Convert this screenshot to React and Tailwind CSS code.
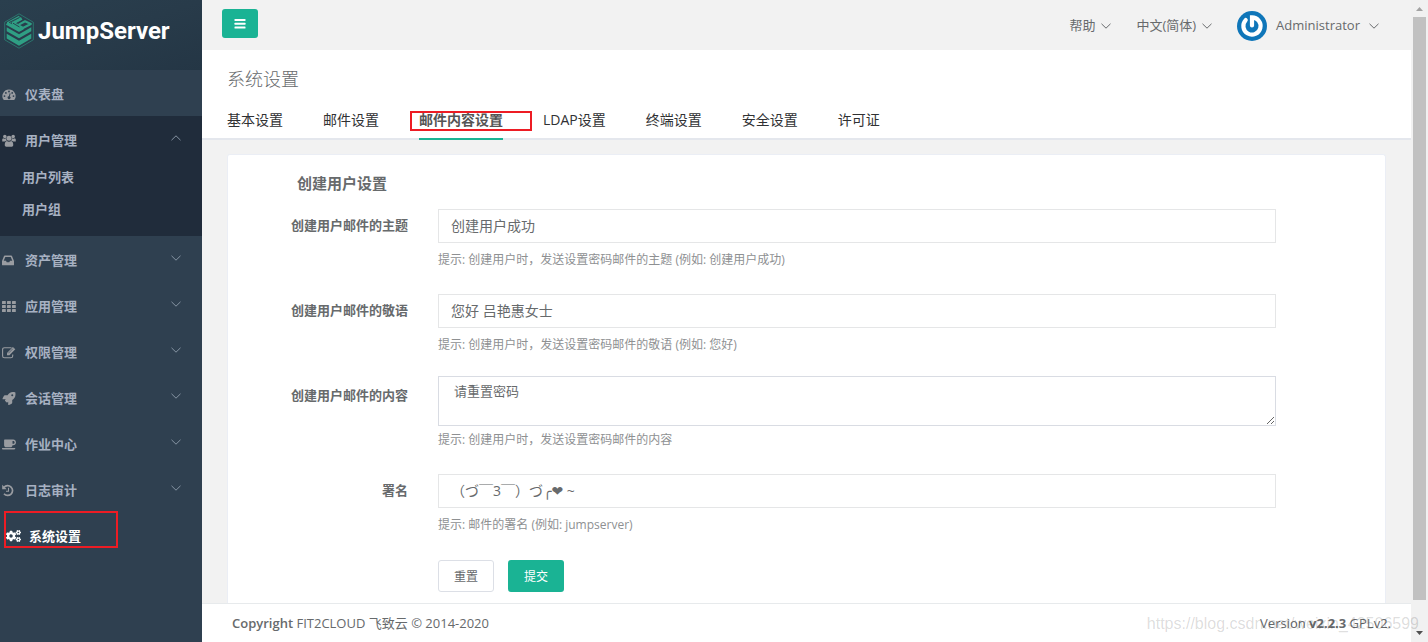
import { FaRocket, FaCoffee, FaCogs } from "react-icons/fa";

const menus = [
  { label: "仪表盘", icon: DashboardIcon },
  { label: "用户管理", icon: GroupIcon, open: true, children: ["用户列表", "用户组"] },
  { label: "资产管理", icon: InboxIcon, arrow: true },
  { label: "应用管理", icon: GridIcon, arrow: true },
  { label: "权限管理", icon: EditIcon, arrow: true },
  { label: "会话管理", icon: FaRocket, arrow: true },
  { label: "作业中心", icon: FaCoffee, arrow: true },
  { label: "日志审计", icon: HistoryIcon, arrow: true },
];

const tabs = [
  { label: "基本设置" },
  { label: "邮件设置" },
  { label: "邮件内容设置", active: true },
  { label: "LDAP设置" },
  { label: "终端设置" },
  { label: "安全设置" },
  { label: "许可证" },
];

function Chevron({ up, className = "" }) {
  return (
    <svg viewBox="0 0 10 6" className={`w-[10px] h-[6px] shrink-0 ${className}`} fill="none" stroke="currentColor">
      <path d={up ? "M0.5 5.2 5 0.8 9.5 5.2" : "M0.5 0.8 5 5.2 9.5 0.8"} />
    </svg>
  );
}

function DashboardIcon({ className }) {
  return (
    <svg viewBox="0 0 14 13" className={className} fill="currentColor">
      <path
        fillRule="evenodd"
        d="M7 1.500A6.600 6.600 0 0 0 1.400 11.600Q1.600 12 2 12H12Q12.400 12 12.600 11.600A6.600 6.600 0 0 0 7 1.500ZM2.500 7.200a.9.9 0 1 1 0 1.800.9.9 0 0 1 0-1.800ZM3.900 4a.9.9 0 1 1 0 1.800.9.9 0 0 1 0-1.800ZM7 2.600a.9.9 0 1 1 0 1.800.9.9 0 0 1 0-1.800ZM10.200 4a.9.9 0 1 1 0 1.800.9.9 0 0 1 0-1.800ZM11.500 7.200a.9.9 0 1 1 0 1.800.9.9 0 0 1 0-1.800ZM7.700 5.300l.9.200-.8 3a1.400 1.400 0 1 1-.9-.2Z"
      />
    </svg>
  );
}

function GroupIcon({ className }) {
  return (
    <svg viewBox="0 0 15 14" className={className} fill="currentColor">
      <circle cx="3" cy="2.800" r="1.900" />
      <circle cx="12" cy="2.800" r="1.900" />
      <path d="M0.200 8V6Q0.200 4.600 1.400 4.500 3 5.500 4.300 4.700 4.200 6.200 5.200 7.200 3.800 7.200 3 8.200H1Q0.200 8.200 0.200 8ZM14.800 8V6Q14.800 4.600 13.600 4.500 12 5.500 10.700 4.700 10.800 6.200 9.800 7.200 11.200 7.200 12 8.200H14Q14.800 8.200 14.800 8Z" />
      <circle cx="7.500" cy="4.700" r="2.700" />
      <path d="M2.900 12.200Q2.900 7.800 5.200 7.500 7.500 9.200 9.800 7.500 12.100 7.800 12.100 12.200 12 13.800 10.500 13.800H4.500Q3 13.800 2.900 12.200Z" />
    </svg>
  );
}

function InboxIcon({ className }) {
  return (
    <svg viewBox="0 0 14 13" className={className} fill="currentColor">
      <path
        fillRule="evenodd"
        d="M2.800 1.500H9.200Q9.800 1.500 10 2L12 6.900V10.700Q12 11.300 11.400 11.300H0.600Q0 11.300 0 10.700V6.900L2 2Q2.200 1.500 2.800 1.500ZM3.300 3 1.700 6.800H4L4.700 8.300H7.300L8 6.800H10.300L8.700 3Z"
      />
    </svg>
  );
}

function GridIcon({ className }) {
  return (
    <svg viewBox="0 0 14 13" className={className} fill="currentColor">
      {[1, 5, 9].map((y) =>
        [0, 5, 10].map((x) => <rect key={`${x}-${y}`} x={x} y={y} width="3.800" height="3" rx="0.500" />)
      )}
    </svg>
  );
}

function EditIcon({ className }) {
  return (
    <svg viewBox="0 0 14 13" className={className} fill="none" stroke="currentColor">
      <path d="M9.500 1.700H2.500Q0.600 1.700 0.600 3.600V9.900Q0.600 11.800 2.500 11.800H8.800Q10.700 11.800 10.700 9.900V8.500" strokeWidth="1.100" />
      <path d="M5 9.200V6.900L10.900 1 13.300 3.300 7.400 9.200Z" fill="currentColor" stroke="none" />
      <path d="M6.300 7.300 10.900 2.700" stroke="#2f4050" strokeWidth="0.600" />
    </svg>
  );
}

function HistoryIcon({ className }) {
  return (
    <svg viewBox="0 0 14 13" className={className} fill="none" stroke="currentColor" strokeWidth="1.700">
      <path d="M2 3.300A4.900 4.900 0 1 1 2 9.800" />
      <path d="M0.200 0.800V5.300H4.700Z" fill="currentColor" stroke="none" />
      <path d="M6.500 3.700V7.300H4" strokeWidth="1.100" />
    </svg>
  );
}

function BarsIcon() {
  return (
    <svg viewBox="0 0 12 10" className="w-[12px] h-[10px]" fill="currentColor">
      <rect x="0.500" y="0" width="11" height="2" rx="0.500" />
      <rect x="0.500" y="3.800" width="11" height="2" rx="0.500" />
      <rect x="0.500" y="7.500" width="11" height="2" rx="0.500" />
    </svg>
  );
}

function Logo() {
  return (
    <svg viewBox="0 0 30 36" className="w-[30px] h-[36px] shrink-0" fill="none">
      <path d="M15 0.8 29.3 9.2V26.8L15 35.2 0.7 26.8V9.2Z" stroke="#2b7a70" strokeWidth="0.9" />
      <g stroke="#2f9f84" strokeWidth="3.400" strokeLinejoin="round">
        <path d="M2.800 10.300 15 17 18.300 15.200 9.500 10.200 17.800 5.600" />
        <path d="M15.500 3.600 3.500 10.300M14.800 11.600 21 8.300 26.800 10.900 15 17" strokeWidth="2.200" />
      </g>
      <path d="M5 9.600 15.500 4.400M9 10.200 15.500 14M12.500 10.300 19.500 6.700" stroke="#263949" strokeWidth="0.900" />
      <path d="M2.700 14.200 15 21.200 27.300 14.200V18.200L15 25.300 2.700 18.200Z" fill="#2f9f84" />
      <path d="M2.700 20.800 15 27.700 27.300 20.800V25.500L15 32.800 2.700 25.500Z" fill="#2f9f84" />
    </svg>
  );
}

function Avatar() {
  return (
    <svg viewBox="0 0 30 30" className="w-[30px] h-[30px] shrink-0" fill="none">
      <circle cx="15" cy="15" r="15" fill="#0f76b9" />
      <path d="M15 14.500V6.400A8.600 8.600 0 1 1 8.700 9.100" stroke="#fff" strokeWidth="4.200" strokeLinecap="round" />
    </svg>
  );
}

function MenuItem({ item }) {
  const Icon = item.icon;
  return (
    <li className={item.open ? "bg-[#202c3b] pb-[10px]" : ""}>
      <a href="#" className="flex items-center h-[46px] pl-[2px] pr-[21px] font-semibold">
        <Icon className="w-[14px] h-[13px] mt-[2px] shrink-0 text-[#999ca1]" />
        <span className="ml-[9px] mt-1 flex-1">{item.label}</span>
        {(item.arrow || item.open) && <Chevron up={item.open} className="mb-[2px] text-[#8694a3]" />}
      </a>
      {item.children && (
        <ul>
          {item.children.map((child) => (
            <li key={child}>
              <a href="#" className="flex items-center h-8 pl-[22px] font-semibold">
                {child}
              </a>
            </li>
          ))}
        </ul>
      )}
    </li>
  );
}

function Sidebar() {
  return (
    <nav className="w-[202px] shrink-0 bg-[#2f4050] text-[#a7b1c2]">
      <div className="flex items-center gap-1 h-[70px] pl-1 pb-2 bg-linear-to-br from-[#2a3f4e] via-[#283b4a] to-[#243645]">
        <Logo />
        <span className="font-[Roboto] text-2xl font-bold text-white">JumpServer</span>
      </div>
      <ul>
        {menus.map((item) => (
          <MenuItem key={item.label} item={item} />
        ))}
        <li className="relative">
          <a href="#" className="flex items-center h-[46px] pl-[6px] font-semibold text-white">
            <FaCogs className="w-[15px] h-[14px] mt-[2px]" />
            <span className="ml-2 mt-1">系统设置</span>
          </a>
          <div className="absolute left-1 -top-px w-[114px] h-[37px] border-2 border-[#ed1c24] pointer-events-none" />
        </li>
      </ul>
    </nav>
  );
}

function TopBar() {
  return (
    <header className="flex items-center justify-between h-[50px] pl-5 pr-8 shrink-0">
      <button
        aria-label="菜单"
        className="flex items-center justify-center w-9 h-[29px] mb-[3px] rounded-[3px] bg-[#1ab394] text-white"
      >
        <BarsIcon />
      </button>
      <div className="flex items-center mt-[2px] text-[#676a6c]">
        <a href="#" className="flex items-center gap-[6px]">
          帮助 <Chevron />
        </a>
        <a href="#" className="flex items-center gap-[6px] ml-[25px]">
          中文(简体) <Chevron />
        </a>
        <a href="#" className="flex items-center gap-[9px] ml-[25px]">
          <Avatar />
          Administrator <Chevron />
        </a>
      </div>
    </header>
  );
}

function Field({ id, label, hint, tall, children }) {
  return (
    <div className="flex gap-[30px]">
      <label
        htmlFor={id}
        className={`w-[180px] shrink-0 text-right font-bold leading-[18px] ${tall ? "pt-[10px]" : "pt-[7px]"}`}
      >
        {label}
      </label>
      <div className="flex-1 min-w-0">
        {children}
        <p className={`text-xs leading-[18px] text-[#8e9092] ${tall ? "mt-[5px]" : "mt-2"}`}>{hint}</p>
      </div>
    </div>
  );
}

const inputClass = "block w-full h-[34px] px-3 pb-[2px] border border-[#e5e6e7] bg-white text-sm";

function SettingsForm() {
  return (
    <form className="flex-1 pr-[109px] pt-[17px]">
      <h3 className="pl-[69px] mb-[15px] text-[15px] leading-[22px] font-semibold">创建用户设置</h3>
      <div className="flex flex-col">
        <Field id="subject" label="创建用户邮件的主题" hint="提示: 创建用户时，发送设置密码邮件的主题 (例如: 创建用户成功)">
          <input id="subject" type="text" defaultValue="创建用户成功" className={inputClass} />
        </Field>
        <div className="h-[25px]" />
        <Field id="honorific" label="创建用户邮件的敬语" hint="提示: 创建用户时，发送设置密码邮件的敬语 (例如: 您好)">
          <input id="honorific" type="text" defaultValue="您好 吕艳惠女士" className={inputClass} />
        </Field>
        <div className="h-[22px]" />
        <Field id="body" label="创建用户邮件的内容" hint="提示: 创建用户时，发送设置密码邮件的内容" tall>
          <textarea
            id="body"
            defaultValue="请重置密码"
            className="block w-full h-[50px] px-[15px] py-[5px] border border-[#d9dce3] bg-white leading-[18px]"
          />
        </Field>
        <div className="h-[25px]" />
        <Field id="signature" label="署名" hint="提示: 邮件的署名 (例如: jumpserver)">
          <input
            id="signature"
            type="text"
            defaultValue="（づ￣3￣）づ╭❤ ~"
            className={`${inputClass} font-['Open_Sans','DejaVu_Sans','Noto_Sans_CJK_SC',sans-serif]`}
          />
        </Field>
      </div>
      <div className="flex gap-[14px] pl-[210px] pt-[26px]">
        <button type="reset" className="w-14 h-8 pt-[2px] rounded-[3px] border border-[#dcdfe6] bg-white text-xs">
          重置
        </button>
        <button type="submit" className="w-14 h-8 pt-[2px] rounded-[3px] bg-[#1ab394] text-white text-xs">
          提交
        </button>
      </div>
    </form>
  );
}

function ScrollBar() {
  return (
    <div className="flex flex-col items-center w-[17px] shrink-0 bg-[#f1f1f1]">
      <svg viewBox="0 0 17 17" className="w-[17px] h-[17px]">
        <path d="M5 11 8.500 7 12 11Z" fill="#a3a3a3" />
      </svg>
      <div className="flex-1 w-[13px] mb-[25px] bg-[#c1c1c1]" />
      <svg viewBox="0 0 17 17" className="w-[17px] h-[17px]">
        <path d="M5 6 8.500 10 12 6Z" fill="#505050" />
      </svg>
    </div>
  );
}

export default function App() {
  return (
    <div className="relative flex h-screen overflow-hidden bg-[#f2f2f2] font-['Open_Sans','Noto_Sans_CJK_SC',sans-serif] text-[13px] text-[#676a6c]">
      <Sidebar />
      <div className="flex flex-col flex-1 min-w-0">
        <TopBar />
        <div className="shrink-0 bg-white border-b-2 border-[#e4e7ed] pl-[25px]">
          <h2 className="pt-4 text-lg leading-[26px] font-light">系统设置</h2>
          <div className="flex gap-10 mt-2 -mb-[2px] text-sm text-[#303133]">
            {tabs.map((tab) => (
              <a
                key={tab.label}
                href="#"
                className={
                  tab.active
                    ? "relative h-10 leading-10 font-bold text-[#555] border-b-2 border-[#1ab394]"
                    : "h-10 leading-10"
                }
              >
                {tab.label}
                {tab.active && (
                  <span className="absolute -left-[9px] top-[11px] w-[122px] h-5 border-2 border-[#ed1c24] pointer-events-none" />
                )}
              </a>
            ))}
          </div>
        </div>
        <main className="flex flex-col flex-1 min-h-0 overflow-hidden pt-[14px] px-[25px]">
          <div className="flex flex-1 bg-white border border-b-0 border-[#ebeef5] rounded-t-[3px]">
            <SettingsForm />
          </div>
        </main>
        <footer className="flex items-center justify-between h-[39px] shrink-0 pt-[2px] pl-[30px] pr-5 bg-white border-t border-[#e7eaec]">
          <div>
            <strong className="font-semibold">Copyright</strong> FIT2CLOUD 飞致云 © 2014-2020
          </div>
          <div>
            Version <strong>v2.2.3</strong> GPLv2.
          </div>
        </footer>
      </div>
      <ScrollBar />
      <div className="absolute right-[9px] bottom-[6px] font-['Liberation_Sans',sans-serif] text-base text-black/15 pointer-events-none">
        https://blog.csdn.net/weixin_42506599
      </div>
    </div>
  );
}
